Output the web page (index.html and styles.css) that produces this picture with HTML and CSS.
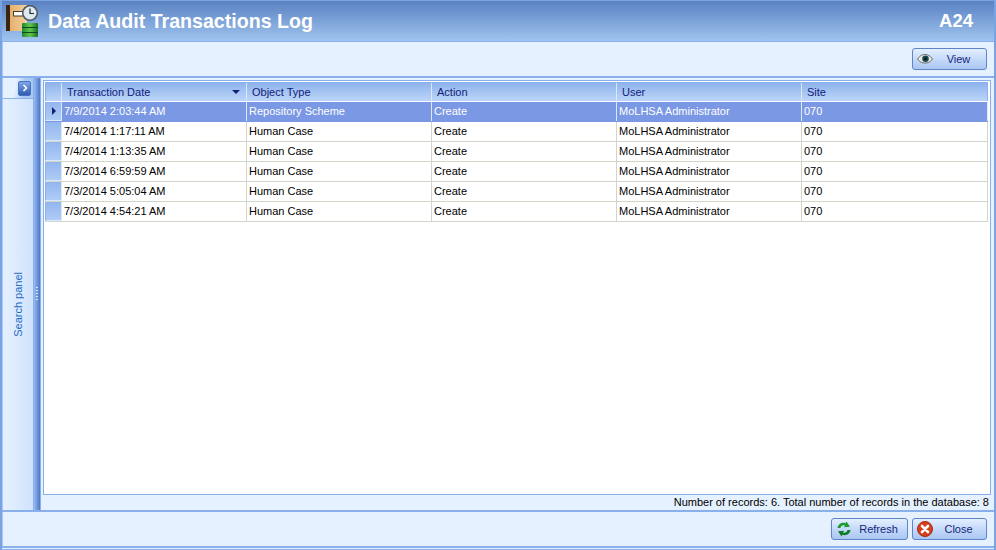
FILE: index.html
```html
<!DOCTYPE html>
<html lang="en">
<head>
<meta charset="utf-8">
<title>Data Audit Transactions Log</title>
<link rel="stylesheet" href="styles.css">
</head>
<body>
<div class="app">
  <header class="titlebar">
    <svg class="logo" width="40" height="38" viewBox="0 0 40 38">
      <defs>
        <linearGradient id="bk" x1="0" x2="1" y1="0" y2="0"><stop offset="0" stop-color="#e6b070"/><stop offset="1" stop-color="#f4d09c"/></linearGradient>
        <linearGradient id="db" x1="0" x2="1" y1="0" y2="0"><stop offset="0" stop-color="#1f8a2c"/><stop offset=".5" stop-color="#62c64e"/><stop offset="1" stop-color="#176e22"/></linearGradient>
      </defs>
      <rect x="6" y="5" width="4" height="26" fill="#3a2410"/>
      <rect x="10" y="5" width="17" height="26" fill="url(#bk)"/>
      <rect x="13.500" y="11.500" width="11" height="4.500" fill="#fff" stroke="#4a3a28" stroke-width="1"/>
      <circle cx="30" cy="13" r="7.300" fill="#dfe8ee" stroke="#4c5c68" stroke-width="1.600"/>
      <path d="M30 8.500V13.500H34" fill="none" stroke="#1a2a30" stroke-width="1.200"/>
      <rect x="22" y="23" width="16" height="14" rx="1" fill="url(#db)"/>
      <path d="M22 27.500H38M22 32.500H38" stroke="#0e4a18" stroke-width="1.200"/>
    </svg>
    <h1 class="title">Data Audit Transactions Log</h1>
    <span class="code">A24</span>
  </header>
  <div class="toolbar">
    <button class="btn" type="button">
      <svg class="ico" width="16" height="16" viewBox="0 0 16 16"><path d="M0.500 8C3 4.500 5.500 3.500 8 3.500S13 4.500 15.500 8C13 11.500 10.500 12 8 12S3 11.500 .5 8Z" fill="#e8e8e4" stroke="#6a6a68"/><circle cx="8.500" cy="7.800" r="3.300" fill="#1d4a50"/><circle cx="8.500" cy="7.800" r="1.400" fill="#06141a"/></svg>
      <span class="btn-label">View</span>
    </button>
  </div>
  <main class="main">
    <aside class="side">
      <div class="side-head"><span class="expand"><svg width="8" height="8" viewBox="0 0 8 8"><path d="M2.500 1L5.500 4L2.500 7" fill="none" stroke="#fff" stroke-width="1.600"/></svg></span></div>
      <div class="side-body"><span class="side-label">Search panel</span></div>
    </aside>
    <div class="splitter"><span class="grip"></span></div>
    <section class="content">
      <div class="grid-box">
        <div class="row head">
          <div class="ind"></div>
          <div class="hc sort">Transaction Date<i class="tri"></i></div>
          <div class="hc">Object Type</div>
          <div class="hc">Action</div>
          <div class="hc">User</div>
          <div class="hc">Site</div>
        </div>
        <div class="row sel">
          <div class="ind"><i class="arrow"></i></div>
          <div class="c">7/9/2014 2:03:44 AM</div><div class="c">Repository Scheme</div><div class="c">Create</div><div class="c">MoLHSA Administrator</div><div class="c">070</div>
        </div>
        <div class="row">
          <div class="ind"></div>
          <div class="c">7/4/2014 1:17:11 AM</div><div class="c">Human Case</div><div class="c">Create</div><div class="c">MoLHSA Administrator</div><div class="c">070</div>
        </div>
        <div class="row">
          <div class="ind"></div>
          <div class="c">7/4/2014 1:13:35 AM</div><div class="c">Human Case</div><div class="c">Create</div><div class="c">MoLHSA Administrator</div><div class="c">070</div>
        </div>
        <div class="row">
          <div class="ind"></div>
          <div class="c">7/3/2014 6:59:59 AM</div><div class="c">Human Case</div><div class="c">Create</div><div class="c">MoLHSA Administrator</div><div class="c">070</div>
        </div>
        <div class="row">
          <div class="ind"></div>
          <div class="c">7/3/2014 5:05:04 AM</div><div class="c">Human Case</div><div class="c">Create</div><div class="c">MoLHSA Administrator</div><div class="c">070</div>
        </div>
        <div class="row">
          <div class="ind"></div>
          <div class="c">7/3/2014 4:54:21 AM</div><div class="c">Human Case</div><div class="c">Create</div><div class="c">MoLHSA Administrator</div><div class="c">070</div>
        </div>
      </div>
      <div class="status">Number of records: 6. Total number of records in the database: 8</div>
    </section>
  </main>
  <footer class="footer">
    <button class="btn wide" type="button">
      <svg class="ico" width="16" height="16" viewBox="0 0 16 16"><path d="M1.500 7C2 3 6 .8 9.500 2.200L10.500 .5L14 5.800L8 6.200L8.900 4.600C6.500 3.800 4.800 5.200 4.500 7Z" fill="#1f9a30"/><path d="M14.500 9C14 13 10 15.200 6.500 13.800L5.500 15.500L2 10.200L8 9.800L7.100 11.400C9.500 12.200 11.200 10.800 11.500 9Z" fill="#0f7a26"/></svg>
      <span class="btn-label">Refresh</span>
    </button>
    <button class="btn" type="button">
      <svg class="ico" width="16" height="16" viewBox="0 0 16 16"><circle cx="8" cy="8" r="7.500" fill="#d8401c" stroke="#a82a10" stroke-width="1"/><path d="M5 5L11 11M11 5L5 11" stroke="#fff" stroke-width="2.600" stroke-linecap="round"/></svg>
      <span class="btn-label">Close</span>
    </button>
  </footer>
  <div class="bottom-line"></div>
</div>
</body>
</html>
```
FILE: styles.css
```css
* { box-sizing: border-box; }
html, body { margin: 0; padding: 0; }
body { width: 996px; height: 550px; overflow: hidden; font-family: "Liberation Sans", Arial, sans-serif; font-size: 11px; color: #000; }
.app { width: 996px; height: 550px; display: flex; flex-direction: column; background: #8ab0ec; border: solid #7aa3e4; border-width: 1px 2px 0 2px; }
.titlebar { height: 40px; flex: none; display: flex; align-items: center; background: linear-gradient(#5a82c2, #9fc4ef); padding: 0 21px 0 0; }
.logo { flex: none; align-self: flex-start; margin: -1px 0 0 -2px; }
.title { margin: 0 0 0 8px; flex: 1; font-size: 19.600px; font-weight: bold; color: #fff; line-height: 40px; white-space: nowrap; }
.code { font-size: 18.500px; font-weight: bold; color: #fff; }
.toolbar { height: 34px; flex: none; margin-top: 1px; background: #e5f1ff; border-left: 1px solid #a9c8f5; display: flex; justify-content: flex-end; align-items: flex-start; padding: 6px 7px 0 0; }
.btn { width: 75px; height: 22px; padding: 0 2px 0 4px; display: flex; align-items: center; border: 1px solid #5f84c8; border-radius: 3px; background: linear-gradient(#e4efff 0, #c8dcfa 45%, #a9c6f2 100%); color: #15277a; font: 11px "Liberation Sans", Arial, sans-serif; }
.btn.wide { width: 77px; }
.ico { flex: none; }
.btn-label { flex: 1; text-align: center; }
.main { height: 432px; flex: none; margin-top: 2px; display: flex; background: #e5f1ff; }
.side { width: 32px; flex: none; padding-left: 1px; display: flex; flex-direction: column; border-right: 1px solid #8ab0ec; background: #a9c8f5; }
.side-head { height: 21px; flex: none; display: flex; justify-content: flex-end; align-items: center; padding-right: 2px; background: linear-gradient(100deg, #e5f1ff 40%, #a9c8f5 70%); border-bottom: 1px solid #8ab0ec; }
.expand { width: 13px; height: 15px; display: flex; align-items: center; justify-content: center; background: linear-gradient(#7fa6e8, #2f5bb0); border-radius: 2px; border: 1px solid #4a72c0; }
.side-body { flex: 1; display: flex; align-items: center; justify-content: center; background: linear-gradient(90deg, #e6f1ff, #cfe2fd); }
.side-label { writing-mode: vertical-rl; transform: rotate(180deg); color: #1f6cc4; font-size: 11px; }
.splitter { width: 6px; flex: none; background: linear-gradient(90deg, #9dbdf0 0, #7fa5e6 30%, #4f78c4 100%); display: flex; align-items: center; justify-content: center; }
.grip { width: 2px; height: 13px; background: repeating-linear-gradient(#d8e6fb 0 1px, transparent 1px 3px); margin-top: -1px; }
.content { flex: 1; min-width: 0; padding: 2px 3px 0 2px; border-left: 1px solid #8ab0ec; display: flex; flex-direction: column; }
.grid-box { height: 415px; flex: none; background: #fff; border: 1px solid #8ab0ec; padding: 1px 2px 0 1px; }
.row { display: grid; grid-template-columns: 17px 185px 185px 185px 185px 186px; height: 20px; border-bottom: 1px solid #cfd8c8; }
.head { height: 19px; margin-bottom: 1px; border-top: 1px solid #8ab0ec; border-bottom: 0; background: linear-gradient(#8fb3ec, #bcd6f8); }
.ind { background: linear-gradient(#94b6ee, #afccf6); border-left: 1px solid #8ab0ec; border-right: 1px solid #dce8fb; border-bottom: 1px solid #dce8fb; display: flex; align-items: center; justify-content: center; }
.head .ind { background: linear-gradient(#8fb3ec, #bcd6f8); border-bottom: 0; }
.hc { position: relative; color: #12207a; line-height: 18px; padding-left: 5px; border-right: 1px solid #dce8fb; white-space: nowrap; }
.hc:last-child { border-right-color: #8ab0ec; }
.tri { position: absolute; right: 6px; top: 7px; width: 0; height: 0; border: 4px solid transparent; border-top: 4px solid #12207a; border-bottom: 0; }
.c { padding-left: 2px; line-height: 19px; white-space: nowrap; border-right: 1px solid #cfd8c8; color: #000; }
.sel { background: #7b98e4; border-bottom-color: #7b98e4; }
.sel .c { color: #fff; border-right-color: #dce8fb; }
.arrow { width: 0; height: 0; border: 4px solid transparent; border-left: 4px solid #12207a; border-right: 0; }
.status { text-align: right; line-height: 15px; padding-right: 2px; color: #000; }
.footer { height: 34px; flex: none; margin-top: 2px; background: #e5f1ff; border-left: 1px solid #a9c8f5; display: flex; justify-content: flex-end; align-items: flex-start; gap: 4px; padding: 6px 7px 0 0; }
.bottom-line { height: 1px; flex: none; margin: 2px 0 1px; background: #e5f1ff; }
```
